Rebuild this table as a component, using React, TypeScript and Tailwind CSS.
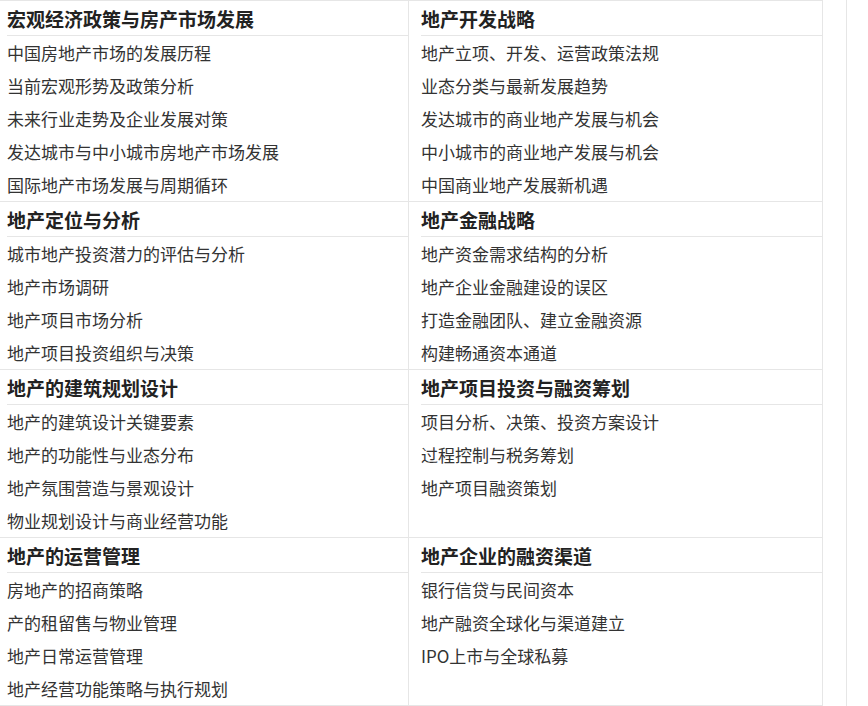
import React from 'react';

interface Block {
  title: string;
  items: string[];
}

const rows: [Block, Block][] = [
  [
    {
      title: '宏观经济政策与房产市场发展',
      items: ['中国房地产市场的发展历程', '当前宏观形势及政策分析', '未来行业走势及企业发展对策', '发达城市与中小城市房地产市场发展', '国际地产市场发展与周期循环'],
    },
    {
      title: '地产开发战略',
      items: ['地产立项、开发、运营政策法规', '业态分类与最新发展趋势', '发达城市的商业地产发展与机会', '中小城市的商业地产发展与机会', '中国商业地产发展新机遇'],
    },
  ],
  [
    {
      title: '地产定位与分析',
      items: ['城市地产投资潜力的评估与分析', '地产市场调研', '地产项目市场分析', '地产项目投资组织与决策'],
    },
    {
      title: '地产金融战略',
      items: ['地产资金需求结构的分析', '地产企业金融建设的误区', '打造金融团队、建立金融资源', '构建畅通资本通道'],
    },
  ],
  [
    {
      title: '地产的建筑规划设计',
      items: ['地产的建筑设计关键要素', '地产的功能性与业态分布', '地产氛围营造与景观设计', '物业规划设计与商业经营功能'],
    },
    {
      title: '地产项目投资与融资筹划',
      items: ['项目分析、决策、投资方案设计', '过程控制与税务筹划', '地产项目融资策划'],
    },
  ],
  [
    {
      title: '地产的运营管理',
      items: ['房地产的招商策略', '产的租留售与物业管理', '地产日常运营管理', '地产经营功能策略与执行规划'],
    },
    {
      title: '地产企业的融资渠道',
      items: ['银行信贷与民间资本', '地产融资全球化与渠道建立', 'IPO上市与全球私募'],
    },
  ],
];

const Cell = ({ block, className = '' }: { block: Block; className?: string }) => (
  <div className={`flex flex-col ${className}`}>
    <div className="h-[34px] box-content border-b border-[#e6e6e6] flex items-center text-[19px] font-bold text-[#222] leading-none">
      {block.title}
    </div>
    {block.items.map((item) => (
      <div key={item} className="h-[33px] flex items-center text-[17px] text-[#333] leading-none">
        {item}
      </div>
    ))}
  </div>
);

const App = () => {
  return (
    <div
      className="flex h-[706px] w-[868px] bg-white overflow-hidden"
      style={{ fontFamily: '"Noto Sans CJK SC", "Noto Sans", sans-serif' }}
    >
      <div className="w-[823px] h-[706px] shrink-0 border-t border-r border-[#e6e6e6] flex flex-col">
        {rows.map(([left, right]) => (
          <div key={left.title} className="grid grid-cols-[409px_1fr] border-b border-[#e6e6e6]">
            <Cell block={left} className="border-r border-[#e6e6e6] pl-[7px]" />
            <Cell block={right} className="pl-[12px]" />
          </div>
        ))}
      </div>
      <div className="w-[23px] shrink-0" />
      <div className="h-[706px] border-l border-[#e6e6e6]" />
    </div>
  );
};

export default App;
